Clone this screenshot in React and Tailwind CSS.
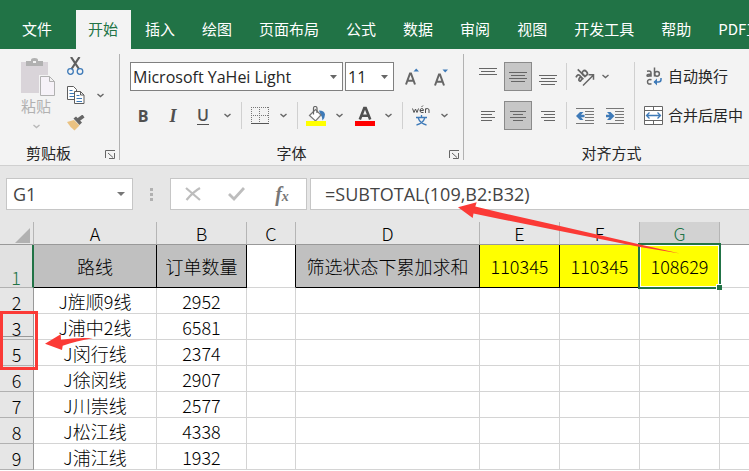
import { useState } from "react";
import clsx from "clsx";

const tabs = ["插入", "绘图", "页面布局", "公式", "数据", "审阅", "视图", "开发工具", "帮助", "PDF工具集"];

const columns = ["A", "B", "C", "D", "E", "F", "G", "H"];

const rows = [
  { id: 2, route: "J旌顺9线", count: 2952 },
  { id: 3, route: "J浦中2线", count: 6581 },
  { id: 5, route: "J闵行线", count: 2374 },
  { id: 6, route: "J徐闵线", count: 2907 },
  { id: 7, route: "J川崇线", count: 2577 },
  { id: 8, route: "J松江线", count: 4338 },
  { id: 9, route: "J浦江线", count: 1932 },
];

const Chevron = ({ className = "text-[#666]" }) => (
  <svg width="7" height="5" viewBox="0 0 7 5" className={className} fill="none" stroke="currentColor" strokeWidth="1.4">
    <path d="M.5 1l3 2.500L6.500 1" />
  </svg>
);

const Caret = () => (
  <svg width="7" height="4" viewBox="0 0 7 4" className="pointer-events-none absolute right-[6px] top-1/2 -translate-y-1/2 fill-[#666]">
    <path d="M0 0h7L3.5 4z" />
  </svg>
);

const Lines = ({ rows, box = 18 }) => (
  <svg width={box} height="18" viewBox={`0 0 ${box} 18`} className="fill-[#666]">
    {rows.map(([x, y, w]) => (
      <rect key={y} x={x} y={y} width={w} height="1" />
    ))}
  </svg>
);

const Launcher = () => (
  <button aria-label="更多选项" className="absolute bottom-[6px] right-1">
    <svg width="10" height="9" viewBox="0 0 10 9" fill="none" stroke="#666">
      <path d="M.5 8V.5H10M3 3l5 4.5M9.500 3v5.500H4" />
    </svg>
  </button>
);

const IconButton = ({ label, active, className = "w-7", children }) => (
  <button
    aria-label={label}
    className={clsx("flex h-[29px] shrink-0 items-center justify-center", active && "border border-[#8a8a8a] bg-[#c6c6c6]", className)}
  >
    {children}
  </button>
);

const Arrow = ({ label }) => (
  <IconButton label={label} className="w-[18px]"><Chevron /></IconButton>
);

const Divider = () => <div className="ml-[5px] mr-1 h-[27px] w-px shrink-0 bg-[#d0d0d0]"></div>;

const Group = ({ title, launcher, className, children }) => (
  <section className={clsx("relative shrink-0 pb-[2px] pt-[13px]", className)}>
    <div className="h-[68px]">{children}</div>
    <h2 className="mt-[13px] text-center leading-5">{title}</h2>
    {launcher && <Launcher />}
  </section>
);

const GroupLine = () => <div className="my-[5px] w-px shrink-0 bg-[#b2b2b2]"></div>;

const Indent = ({ right }) => (
  <svg width="18" height="18" viewBox="0 0 18 18">
    <path d="M0 1.500h18M9 4.500h9M9 7.500h9M9 10.500h9M9 13.500h9M0 16.500h18" stroke="#777" fill="none" />
    {right
      ? <path d="M0 7.800h3.500L1 5h3.500L8.500 9l-4 4H1l2.500-2.800H0z" fill="#3e7ab8" />
      : <path d="M8.500 7.800H5L7.500 5H4L0 9l4 4h3.500L5 10.200h3.500z" fill="#3e7ab8" />}
  </svg>
);

const Clipboard = () => (
  <Group title={<span className="mr-[22px]">剪贴板</span>} launcher className="w-[119px]">
    <div className="flex">
      <button className="-mt-[5px] flex w-[72px] flex-col items-center text-[#b1b1b1]">
        <svg width="36" height="40" viewBox="0 0 36 40" className="ml-1">
          <path d="M1 5h27v31H1z" fill="#d9d4d9" />
          <path d="M6 9V4h5V3q0-2 3.500-2T18 3v1h5v5z" fill="#b1b1b1" />
          <path d="M13 4h3v2h-3z" fill="#f3f3f3" />
          <path d="M20.500 19.500h9l5 5v14h-14z" fill="#f3f3f3" stroke="#f3f3f3" strokeWidth="3" />
          <path d="M20.500 19.500h9l5 5v14h-14zM29.500 19.500v5h5" fill="#f6f2f8" stroke="#b1b1b1" />
        </svg>
        <span className="-mt-px leading-5">粘贴</span>
        <span className="mt-2"><Chevron className="text-[#b8b8b8]" /></span>
      </button>
      <div className="-ml-[5px] -mt-[5px] flex w-10 flex-col gap-[10px]">
        <button aria-label="剪切" className="h-[19px] w-[18px]">
          <svg width="18" height="19" viewBox="0 0 18 19" fill="none">
            <path d="M4 0l8 12M12.500 0l-8 12" stroke="#5e5e5e" strokeWidth="2.200" />
            <circle cx="3.500" cy="14.500" r="2.800" stroke="#3e7ab8" strokeWidth="1.300" />
            <circle cx="13" cy="14.500" r="2.800" stroke="#3e7ab8" strokeWidth="1.300" />
          </svg>
        </button>
        <button aria-label="复制" className="flex h-[19px] w-10 items-center gap-3">
          <svg width="18" height="19" viewBox="0 0 18 19" fill="#fff" stroke="#5e5e5e">
            <path d="M.5.5h6l3 3v10h-9z" />
            <path d="M2.500 4.500h3M2.500 7.500h5M2.500 10.500h5" stroke="#3e7ab8" />
            <path d="M7.500 5.500h6l3.500 3.500v8.500H7.500zM13.500 5.500V9H17" />
            <path d="M9.500 9.500h3M9.500 12.500h5.500M9.500 15.500h5.500" stroke="#3e7ab8" />
          </svg>
          <Chevron />
        </button>
        <button aria-label="格式刷" className="h-4 w-[18px]">
          <svg width="18" height="16" viewBox="0 0 18 16">
            <path d="M0 7l7-2 5.500 5.500L7.500 15.500Q3 12 0 7z" fill="#eac282" />
            <path d="M6.500 3.500l2.500-2 6 6-2.500 2.500z" fill="#666" />
            <path d="M11 5l5.500-4" stroke="#666" strokeWidth="3.500" />
          </svg>
        </button>
      </div>
    </div>
  </Group>
);

const selectStyle = "h-full w-full appearance-none border border-[#808080] bg-white px-[2px] font-['Open_Sans','Noto_Sans_CJK_SC',sans-serif] text-base text-[#262626]";

const FontGroup = () => (
  <Group title="字体" launcher className="w-[343px]">
    <div className="ml-[10px] flex gap-[2px]">
      <div className="relative h-[29px] w-[213px]">
        <select aria-label="字体" className={selectStyle}>
          <option>Microsoft YaHei Light</option>
        </select>
        <Caret />
      </div>
      <div className="relative h-[29px] w-[49px]">
        <select aria-label="字号" className={selectStyle}>
          <option>11</option>
        </select>
        <Caret />
      </div>
      <IconButton label="增大字号" className="ml-[2px] w-7">
        <svg width="14" height="18" viewBox="0 0 14 18" fill="none">
          <path d="M1 16.500L5 5.500h1l4 11M2.500 12.800h6" stroke="#666" strokeWidth="2" />
          <path d="M8.500 3.500H14L11.200.5z" fill="#3e7ab8" />
        </svg>
      </IconButton>
      <IconButton label="减小字号" className="-ml-px w-7">
        <svg width="14" height="18" viewBox="0 0 14 18" fill="none">
          <path d="M1 17.500L5 6.500h1l4 11M2.500 13.800h6" stroke="#666" strokeWidth="2" />
          <path d="M8.500 1.500H14l-2.800 3z" fill="#3e7ab8" />
        </svg>
      </IconButton>
    </div>
    <div className="ml-2 mt-[10px] flex items-center font-['Open_Sans',sans-serif] text-[#505050]">
      <IconButton label="加粗" className="w-[30px]"><b className="text-base">B</b></IconButton>
      <IconButton label="倾斜" className="w-[30px]"><b className="font-['Liberation_Serif',serif] text-lg italic">I</b></IconButton>
      <IconButton label="下划线" className="w-[30px]"><span className="border-b border-[#505050] text-base font-semibold leading-[17px]">U</span></IconButton>
      <Arrow label="下划线选项" />
      <Divider />
      <IconButton label="边框">
        <svg width="18" height="18" viewBox="0 0 18 18" fill="none" stroke="#777">
          <path d="M0 .5h18M.5 0v16M8.500 0v16M17.500 0v16M0 8.500h18" strokeDasharray="1 1" />
          <path d="M0 16.500h18" stroke="#555" />
        </svg>
      </IconButton>
      <Arrow label="边框选项" />
      <Divider />
      <IconButton label="填充颜色">
        <svg width="20" height="20" viewBox="0 0 20 20" fill="none">
          <path d="M13 4.500q5.500 0 6 4 0 3-2.500 6-.5-4.500-2-6z" fill="#3e7ab8" />
          <path d="M3.500 9.500L9.500 3.500l5.500 5.500L9.500 15z" fill="#fff" stroke="#777" strokeWidth="1.200" />
          <path d="M7.500 8.500V2q0-1.500 1.700-1.500T11 2v5" stroke="#666" strokeWidth="1.200" />
          <path d="M0 15h20v5H0z" fill="#ff0" />
        </svg>
      </IconButton>
      <Arrow label="填充颜色选项" />
      <IconButton label="字体颜色" className="ml-[3px] w-7">
        <svg width="20" height="20" viewBox="0 0 20 20" fill="none">
          <path d="M4.800 13.500L9.300 2h1.400l4.500 11.500M6.500 9.800h7" stroke="#505050" strokeWidth="2.600" />
          <path d="M0 15h20v5H0z" fill="#f00" />
        </svg>
      </IconButton>
      <Arrow label="字体颜色选项" />
      <Divider />
      <IconButton label="拼音指南">
        <svg width="18" height="21" viewBox="0 0 18 21" fill="none" stroke="#505050">
          <path d="M.5 3.500l1.500 4 1.500-3.500L5 7.500l1.500-4M8 5.500h3.500q0-2-1.700-2T8 5.500t2 2h1.500M9.500 2L11 .5M13.500 8V3.500M13.500 5q0-1.500 1.700-1.500T17 5v3" />
          <path d="M4 12.500h11M9.500 10v2.500M6 12.500q2 6 8.500 7.500M13 12.500q-2 6-8.500 7.500" stroke="#3e7ab8" strokeWidth="1.300" />
        </svg>
      </IconButton>
      <Arrow label="拼音选项" />
    </div>
  </Group>
);

const AlignGroup = () => (
  <Group title={<span>对齐方式</span>} className="grow pl-[10px]">
    <div className="flex">
      <div className="flex flex-col gap-[10px]">
        <div className="flex items-center">
          <IconButton label="顶端对齐"><Lines rows={[[0, 0, 18], [2, 3, 14], [0, 6, 18]]} /></IconButton>
          <IconButton label="垂直居中" active className="ml-[2px] w-7"><Lines rows={[[0, 4, 18], [2, 7, 14], [0, 10, 18], [2, 13, 14]]} /></IconButton>
          <IconButton label="底端对齐" className="ml-[2px] w-7"><Lines rows={[[0, 7, 18], [2, 10, 14], [0, 13, 18], [2, 16, 14]]} /></IconButton>
          <div className="mx-1 h-[27px] w-px bg-[#d0d0d0]"></div>
          <IconButton label="方向">
            <svg width="20" height="20" viewBox="0 0 20 20" fill="none" stroke="#666">
              <g strokeWidth="1.700" transform="rotate(-45 7 8)">
                <path d="M1 5.500q4-1.500 4 1V12M5 8.500q-4-.3-4 1.600t4 .4M8 1v11" />
                <ellipse cx="10.300" cy="8.700" rx="2.300" ry="2.700" />
              </g>
              <path d="M8 18.500L18 8.500M13.500 7.800h5v5" strokeWidth="1.500" />
            </svg>
          </IconButton>
          <IconButton label="方向选项" className="w-3"><Chevron /></IconButton>
        </div>
        <div className="flex items-center">
          <IconButton label="左对齐"><Lines box={14} rows={[[0, 4, 14], [0, 7, 11], [0, 10, 14], [0, 13, 11]]} /></IconButton>
          <IconButton label="居中" active className="ml-[2px] w-7"><Lines box={16} rows={[[0, 4, 16], [3, 7, 10], [0, 10, 16], [3, 13, 10]]} /></IconButton>
          <IconButton label="右对齐" className="ml-[2px] w-7"><Lines box={14} rows={[[0, 4, 14], [3, 7, 11], [0, 10, 14], [3, 13, 11]]} /></IconButton>
          <div className="mx-1 h-[27px] w-px bg-[#d0d0d0]"></div>
          <IconButton label="减少缩进"><Indent /></IconButton>
          <IconButton label="增加缩进" className="ml-[2px] w-7"><Indent right /></IconButton>
        </div>
      </div>
      <div className="ml-[5px] mr-2 w-px bg-[#d0d0d0]"></div>
      <div className="flex flex-col gap-[10px]">
        <button className="flex h-[29px] items-center gap-[5px] whitespace-nowrap">
          <svg width="20" height="20" viewBox="0 0 20 20" fill="none" stroke="#666" strokeWidth="1.500">
            <path d="M4 4.300q4-1 4 1.500v4M8 7.200Q4 7 4 8.500t4 0M11.500.5v9" />
            <ellipse cx="14" cy="6.800" rx="2.400" ry="2.400" />
            <path d="M8.500 12.800q-4-1-4 2t4 2" />
            <path d="M18 11v1.500q0 2.500-2.500 2.500H11" stroke="#3e7ab8" />
            <path d="M14 11.500v7L10.500 15z" fill="#3e7ab8" stroke="none" />
          </svg>
          自动换行
        </button>
        <button className="flex h-[29px] items-center gap-[5px] whitespace-nowrap">
          <svg width="20" height="20" viewBox="0 0 20 20" fill="none" stroke="#666">
            <path d="M1.500.5h18v18h-18z" fill="#fff" />
            <path d="M1 4.500h19M1 14.500h19M10.500 0v4M10.500 15v4" />
            <path d="M3.500 9.500h14M6.500 6.500l-3 3 3 3M14.500 6.500l3 3-3 3" stroke="#3e7ab8" strokeWidth="1.300" />
          </svg>
          合并后居中
        </button>
      </div>
    </div>
  </Group>
);

const FormulaBar = () => {
  const [formula, setFormula] = useState("=SUBTOTAL(109,B2:B32)");

  return (
    <div className="flex bg-[#e6e6e6] py-3 pl-[6px] font-['Open_Sans','Noto_Sans_CJK_SC',sans-serif] text-lg text-[#444]">
      <div className="relative h-8 w-[127px] shrink-0">
        <input aria-label="名称框" defaultValue="G1" className="h-full w-full border border-[#c6c6c6] bg-white px-[6px]" />
        <svg width="8" height="4" viewBox="0 0 8 4" className="absolute right-2 top-[14px] fill-[#777]"><path d="M0 0h8L4 4z" /></svg>
      </div>
      <div className="flex w-[37px] shrink-0 flex-col items-center justify-center gap-[2px]">
        <i className="size-[3px] bg-[#b1b1b1]"></i>
        <i className="size-[3px] bg-[#b1b1b1]"></i>
        <i className="size-[3px] bg-[#b1b1b1]"></i>
      </div>
      <div className="flex h-8 w-[137px] shrink-0 items-center justify-between border border-[#c6c6c6] bg-white px-[14px]">
        <button aria-label="取消">
          <svg width="16" height="14" viewBox="0 0 16 14" fill="none" stroke="#bdbdbd" strokeWidth="2.200"><path d="M1 1l14 12M15 1Q8 5 1.500 13" /></svg>
        </button>
        <button aria-label="输入">
          <svg width="17" height="14" viewBox="0 0 17 14" fill="none" stroke="#bdbdbd" strokeWidth="2.800"><path d="M1 7l5 5L16 1" /></svg>
        </button>
        <button aria-label="插入函数" className="w-5 font-['Liberation_Serif',serif] text-xl font-bold italic leading-6 text-[#777]">
          f<span className="text-sm">x</span>
        </button>
      </div>
      <input
        aria-label="编辑栏"
        value={formula}
        onChange={e => setFormula(e.target.value)}
        className="ml-[3px] h-8 min-w-0 grow border border-r-0 border-[#c6c6c6] bg-white px-[14px]"
      />
    </div>
  );
};

const head = "border-b border-r border-black bg-[#c0c0c0] p-0 font-light";
const total = "border-b border-r border-black bg-[#ff0] p-0";

const Sheet = () => (
  <table className="w-full table-fixed border-separate border-spacing-0 text-center text-lg font-light leading-6 text-black">
    <colgroup>
      <col className="w-[34px]" />
      <col className="w-[123px]" />
      <col className="w-[90px]" />
      <col className="w-[49px]" />
      <col className="w-[184px]" />
      <col className="w-[80px]" />
      <col className="w-[80px]" />
      <col className="w-[80px]" />
      <col />
    </colgroup>
    <thead>
      <tr className="h-[23px] bg-[#e6e6e6] leading-[22px]">
        <td className="border-b border-r border-b-[#999] border-r-[#b5b5b5] p-0">
          <svg width="15" height="15" viewBox="0 0 15 15" className="ml-auto mr-[3px] mt-1 fill-[#b1b1b1]"><path d="M15 0v15H0z" /></svg>
        </td>
        {columns.map(name => (
          <th
            key={name}
            scope="col"
            className={clsx("border-b border-r border-b-[#999] border-r-[#b5b5b5] p-0 font-light last:border-r-0", name === "G" && "bg-[#d2d2d2] text-[#217346]")}
          >
            {name === "H" ? "" : name}
          </th>
        ))}
      </tr>
    </thead>
    <tbody>
      <tr className="h-[43px]">
        <th scope="row" className="border-b border-r-2 border-b-[#b1b1b1] border-r-[#217346] bg-[#e1e1e1] p-0 align-bottom font-light leading-5 text-[#217346]">1</th>
        <th className={head}>路线</th>
        <th className={head}>订单数量</th>
        <td className="border-b border-r border-b-[#d4d4d4] border-r-black"></td>
        <th className={head}>筛选状态下累加求和</th>
        <td className={total}>110345</td>
        <td className={total}>110345</td>
        <td className="relative border-b border-r border-[#ff0] bg-[#ff0] p-0">
          108629
          <span className="absolute -bottom-[2px] -left-[2px] -right-[2px] -top-[2px] border-2 border-[#217346] ring-1 ring-inset ring-white"></span>
          <span className="absolute -bottom-[3px] -right-[3px] size-[6px] border-l border-t border-white bg-[#217346]"></span>
        </td>
        <td className="border-b border-[#d4d4d4]"></td>
      </tr>
      {rows.map(({ id, route, count }) => (
        <tr key={id} className="h-[26px] *:border-b *:border-r *:border-[#d4d4d4] *:p-0 *:last:border-r-0">
          <th scope="row" className="relative border-b-[#b1b1b1]! border-r-[#999]! bg-[#e6e6e6] align-bottom font-light leading-[22px]">
            {id}
            {id === 3 && <span className="absolute bottom-[2px] left-0 h-px w-full bg-[#999]"></span>}
          </th>
          <td>{route}</td>
          <td>{count}</td>
          <td></td>
          <td></td>
          <td></td>
          <td></td>
          <td></td>
          <td></td>
        </tr>
      ))}
    </tbody>
  </table>
);

const App = () => {
  return (
    <div className="relative min-h-screen overflow-hidden bg-white font-['Noto_Sans_CJK_SC',sans-serif] text-[15px] text-[#262626]">
      <nav className="flex h-[49px] gap-[2px] overflow-hidden whitespace-nowrap bg-[#217346] pt-[10px] text-white *:shrink-0 *:pl-3 *:pr-[13px]">
        <button className="pl-[22px]! pr-[22px]!">文件</button>
        <button className="bg-[#f3f3f3] text-[#217346]">开始</button>
        {tabs.map(tab => <button key={tab}>{tab}</button>)}
      </nav>

      <div className="flex overflow-hidden border-b border-[#d0d0d0] bg-[#f3f3f3]">
        <Clipboard />
        <GroupLine />
        <FontGroup />
        <GroupLine />
        <AlignGroup />
      </div>

      <FormulaBar />
      <Sheet />

      {/* red callouts */}
      <div className="pointer-events-none absolute left-0 top-[311px] h-[59px] w-[38px] border-3 border-[#fb3a36]"></div>
      <svg width="749" height="471" viewBox="0 0 749 471" className="pointer-events-none absolute left-0 top-0 fill-[#fb3a36]">
        <path d="M458 207.300L476.700 202.300L475.300 206.500L500 212.500L560 226L640 244.500L680 253.500L640 247L560 231L500 219L473.500 213.500L472.700 218z" />
        <path d="M45 343.700L60.700 334.300L61 339.700Q76 337.500 93 338.300Q76 341 62.700 345.700L62 350z" />
      </svg>
    </div>
  );
};

export default App;
